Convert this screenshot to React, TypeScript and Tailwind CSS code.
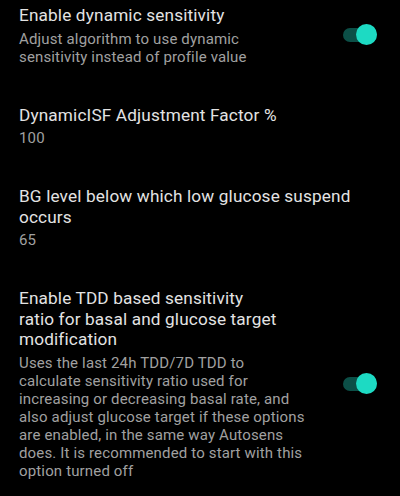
import React from 'react';

type Pref = {
  title: string[];
  summary: string[];
  toggle?: boolean;
};

const prefs: Pref[] = [
  {
    title: ['Enable dynamic sensitivity'],
    summary: ['Adjust algorithm to use dynamic', 'sensitivity instead of profile value'],
    toggle: true,
  },
  {
    title: ['DynamicISF Adjustment Factor %'],
    summary: ['100'],
  },
  {
    title: ['BG level below which low glucose suspend', 'occurs'],
    summary: ['65'],
  },
  {
    title: ['Enable TDD based sensitivity', 'ratio for basal and glucose target', 'modification'],
    summary: [
      'Uses the last 24h TDD/7D TDD to',
      'calculate sensitivity ratio used for',
      'increasing or decreasing basal rate, and',
      'also adjust glucose target if these options',
      'are enabled, in the same way Autosens',
      'does. It is recommended to start with this',
      'option turned off',
    ],
    toggle: true,
  },
];

function Switch() {
  return (
    <div className="relative w-[34px] h-[22px] shrink-0">
      <div className="absolute left-0 right-0 top-[4px] h-[14px] rounded-full bg-[#0c4f47]" />
      <div className="absolute right-0 top-0 w-[21px] h-[21px] rounded-full bg-[#1ddac3]" />
    </div>
  );
}

export default function App() {
  return (
    <div
      className="w-[400px] h-[496px] overflow-hidden bg-black pt-[5px] flex flex-col gap-[39px]"
      style={{ fontFamily: 'Roboto, "Noto Sans", sans-serif' }}
    >
      {prefs.map((p, i) => (
        <div key={i} className="flex items-center pl-[19px] pr-[23px]">
          <div className="flex-1 min-w-0">
            <div className="text-[17.2px] leading-[20.5px] tracking-[0.15px] text-[#e3e3e3]">
              {p.title.map((line, j) => (
                <div key={j} className="whitespace-nowrap">{line}</div>
              ))}
            </div>
            <div className="mt-[4px] text-[15px] leading-[18px] tracking-[0.15px] text-[#a0a0a0]">
              {p.summary.map((line, j) => (
                <div key={j} className="whitespace-nowrap">{line}</div>
              ))}
            </div>
          </div>
          {p.toggle && <Switch />}
        </div>
      ))}
    </div>
  );
}
